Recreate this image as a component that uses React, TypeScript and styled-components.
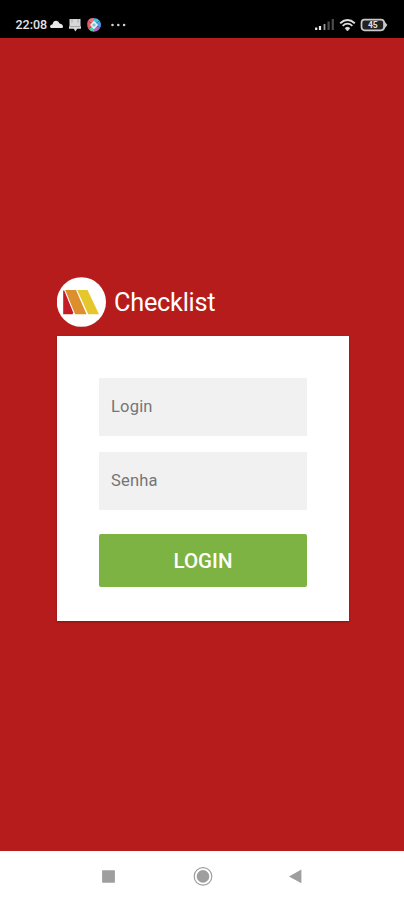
import { FunctionComponent, useState } from "react"
import styled, { createGlobalStyle } from "styled-components"

const Colors = {
    Background: '#b71c1c',
    Field: '#f1f1f1',
    Placeholder: '#757575',
    Button: '#7cb342',
    NavIcon: '#9e9e9e',
}

const Fields = [
    {
        name: 'login',
        label: 'Login',
        type: 'text'
    },
    {
        name: 'password',
        label: 'Senha',
        type: 'password'
    },
]

const GlobalStyle = createGlobalStyle`
    * {
        box-sizing: border-box;
    }
    body {
        margin: 0;
        font-family: Roboto, "Liberation Sans", sans-serif;
    }
`
const Screen = styled.div`
    height: 100vh;
    display: flex;
    flex-direction: column;
    background: ${Colors.Background};
    overflow: hidden;
`
const StatusBarContainer = styled.header`
    height: 38px;
    flex: none;
    display: flex;
    justify-content: space-between;
    padding: 15px 16px 0 15px;
    background: #000;
    color: #e4e4e4;
`
const StatusGroup = styled.div<{ $gap: number }>`
    height: 19px;
    display: flex;
    align-items: center;
    gap: ${({ $gap }) => $gap}px;
`
const Clock = styled.span`
    width: 32px;
    margin-right: -3px;
    padding-left: 0.5px;
    font-size: 12.5px;
    font-weight: 500;
    line-height: 19px;
    white-space: nowrap;
`
const DotsIcon = styled.svg`
    margin-left: 4px;
`
const Main = styled.main`
    flex: auto;
    display: flex;
    flex-direction: column;
    padding: 239px 55px 0 57px;
`
const Brand = styled.div`
    display: flex;
    align-items: center;
    gap: 8px;
    height: 50px;
    margin-bottom: 9px;
`
const Title = styled.h1`
    margin: 0;
    padding-top: 2px;
    color: #fff;
    font-size: 25.3px;
    font-weight: 400;
    letter-spacing: -0.25px;
    line-height: 50px;
`
const LoginForm = styled.form`
    height: 285px;
    display: flex;
    flex-direction: column;
    padding: 42px 42px 0;
    background: #fff;
    box-shadow: 0 1px 2px rgba(0, 0, 0, 0.3);
`
const Input = styled.input`
    width: 100%;
    height: 58px;
    margin-bottom: 16px;
    padding: 0 12px 1px;
    border: none;
    border-radius: 0;
    outline: none;
    background: ${Colors.Field};
    color: #212121;
    font-family: inherit;
    font-size: 16.5px;
    letter-spacing: 0.2px;

    &::placeholder {
        color: ${Colors.Placeholder};
        opacity: 1;
    }
`
const SubmitButton = styled.button`
    height: 53px;
    margin-top: 8px;
    padding: 0;
    border: none;
    border-radius: 2px;
    background: ${Colors.Button};
    color: #fff;
    font-family: inherit;
    font-size: 20.5px;
    font-weight: 500;
    cursor: pointer;
`
const NavigationBar = styled.nav`
    height: 49px;
    flex: none;
    display: flex;
    align-items: center;
    justify-content: space-between;
    padding: 0 99px 0 101px;
    background: #fff;
`

const Logo: FunctionComponent = () => (
    <svg width="49" height="50" viewBox="0 0 49 50" aria-label="Logo">
        <ellipse cx="24.4" cy="25" rx="24.6" ry="24.8" fill="#fff"/>
        <path d="M6.2 13.4V37.3H15.6L16.2 35.4L7.2 13.4z" fill="#c41c26"/>
        <path d="M8.2 13H19L29.5 37.3H18.1z" fill="#dc8f2c"/>
        <path d="M20.2 13H30.5L42 37.3H31.2z" fill="#e6c72b"/>
    </svg>
)

const StatusBar: FunctionComponent = () => (
    <StatusBarContainer>
        <StatusGroup $gap={6}>
            <Clock>22:08</Clock>
            <svg width="13" height="9" viewBox="0 0 13 9" fill="#e8e8e8">
                <path d="M1.2 8Q0 8 0 6.6Q.2 4.6 2.6 4.2Q3.2 .8 6.2 .8Q8.6 .8 9.6 3.6Q12.8 4.2 13 6.8Q13 8 11.8 8z"/>
            </svg>
            <svg width="12" height="14" viewBox="0 0 12 14">
                <path d="M.5 1H11.5V8.2H12V10.8H8.3L6.4 13.5L4.8 10.8H0V8.2H.5z" fill="#d8d8d8"/>
                <path d="M3 1V4.5M9 1V4.5M.5 8.5H11.5" stroke="#8a8a8a" strokeWidth=".6"/>
            </svg>
            <svg width="14" height="14" viewBox="0 0 14 14">
                <path d="M7 7L1 2.3Q3.4-.4 7 .2z" fill="#eb7282"/>
                <path d="M7 7V.2Q10.4-.2 12.4 2.5z" fill="#48b8df"/>
                <path d="M7 7L12.4 2.5Q15 6 13.3 9.6z" fill="#4b9de0"/>
                <path d="M7 7L13.3 9.6Q11.6 13.6 7 13.8z" fill="#ac65c8"/>
                <path d="M7 7V13.8Q3.6 13.9 1.4 11z" fill="#54cba3"/>
                <path d="M7 7L1.4 11Q-.8 6.5 1 2.3z" fill="#e75a68"/>
                <path d="M7 2.8L11 7L7 11.2L3 7z" fill="#e4f3f4"/>
                <path d="M5 7l2-2 2 2-2 2z" fill="#77c6cd"/>
            </svg>
            <DotsIcon width="15" height="4" viewBox="0 0 15 4" fill="#cfcfcf">
                <circle cx="1.5" cy="2" r="1.3"/>
                <circle cx="7.3" cy="2" r="1.3"/>
                <circle cx="13.1" cy="2" r="1.3"/>
            </DotsIcon>
        </StatusGroup>
        <StatusGroup $gap={4}>
            <svg width="20" height="13" viewBox="0 0 20 13">
                <path d="M1.2 9.5V12M5 8V12" stroke="#eee" strokeWidth="2.2"/>
                <path d="M9.5 6V12" stroke="#999" strokeWidth="1.8"/>
                <path d="M13.6 3.5V12M17.8 1V12" stroke="#4b4b4b" strokeWidth="2.2"/>
            </svg>
            <svg width="17" height="14" viewBox="0 0 17 14" fill="none" stroke="#dedede">
                <path d="M1.2 5.2Q8.5-1 15.8 5.2" strokeWidth="1.9"/>
                <path d="M3.6 7.8Q8.5 3.6 13.4 7.8" strokeWidth="1.7"/>
                <path d="M6 10.2Q8.5 8 11 10.2L8.5 13z" fill="#dedede" strokeWidth=".5"/>
            </svg>
            <svg width="28" height="14" viewBox="0 0 28 14">
                <path d="M24 2.8L27.4 7L24 11.2z" fill="#c9c9c9"/>
                <rect x="1.5" y="1.7" width="22.5" height="10.6" rx="3" fill="#222" stroke="#c9c9c9" strokeWidth="1.7"/>
                <text x="12.8" y="10" textAnchor="middle" fill="#e5e5e5" fontSize="8.5" fontWeight="700">45</text>
            </svg>
        </StatusGroup>
    </StatusBarContainer>
)

const App: FunctionComponent = () => {
    const [values, setValues] = useState<Record<string, string>>({ login: '', password: '' })

    return(
        <Screen>
            <GlobalStyle/>
            <StatusBar/>
            <Main>
                <Brand>
                    <Logo/>
                    <Title>Checklist</Title>
                </Brand>
                <LoginForm onSubmit={(e) => e.preventDefault()}>
                    {Fields.map(({name, label, type}) => (
                        <Input
                            key={name}
                            name={name}
                            type={type}
                            placeholder={label}
                            value={values[name]}
                            onChange={(e) => setValues({ ...values, [name]: e.target.value })}
                        />
                    ))}
                    <SubmitButton type="submit">LOGIN</SubmitButton>
                </LoginForm>
            </Main>
            <NavigationBar>
                <svg width="16" height="20" viewBox="0 0 16 20">
                    <rect x="1.1" y="4.2" width="12.8" height="12.6" rx=".6" fill={Colors.NavIcon}/>
                </svg>
                <svg width="20" height="20" viewBox="0 0 20 20">
                    <circle cx="10" cy="10.4" r="8.8" fill="none" stroke={Colors.NavIcon} strokeWidth="1.2"/>
                    <circle cx="10" cy="10.4" r="6.3" fill={Colors.NavIcon}/>
                </svg>
                <svg width="16" height="20" viewBox="0 0 16 20">
                    <path d="M0 10.4L12.4 3.6V17.2z" fill={Colors.NavIcon}/>
                </svg>
            </NavigationBar>
        </Screen>
    )
}

export default App
